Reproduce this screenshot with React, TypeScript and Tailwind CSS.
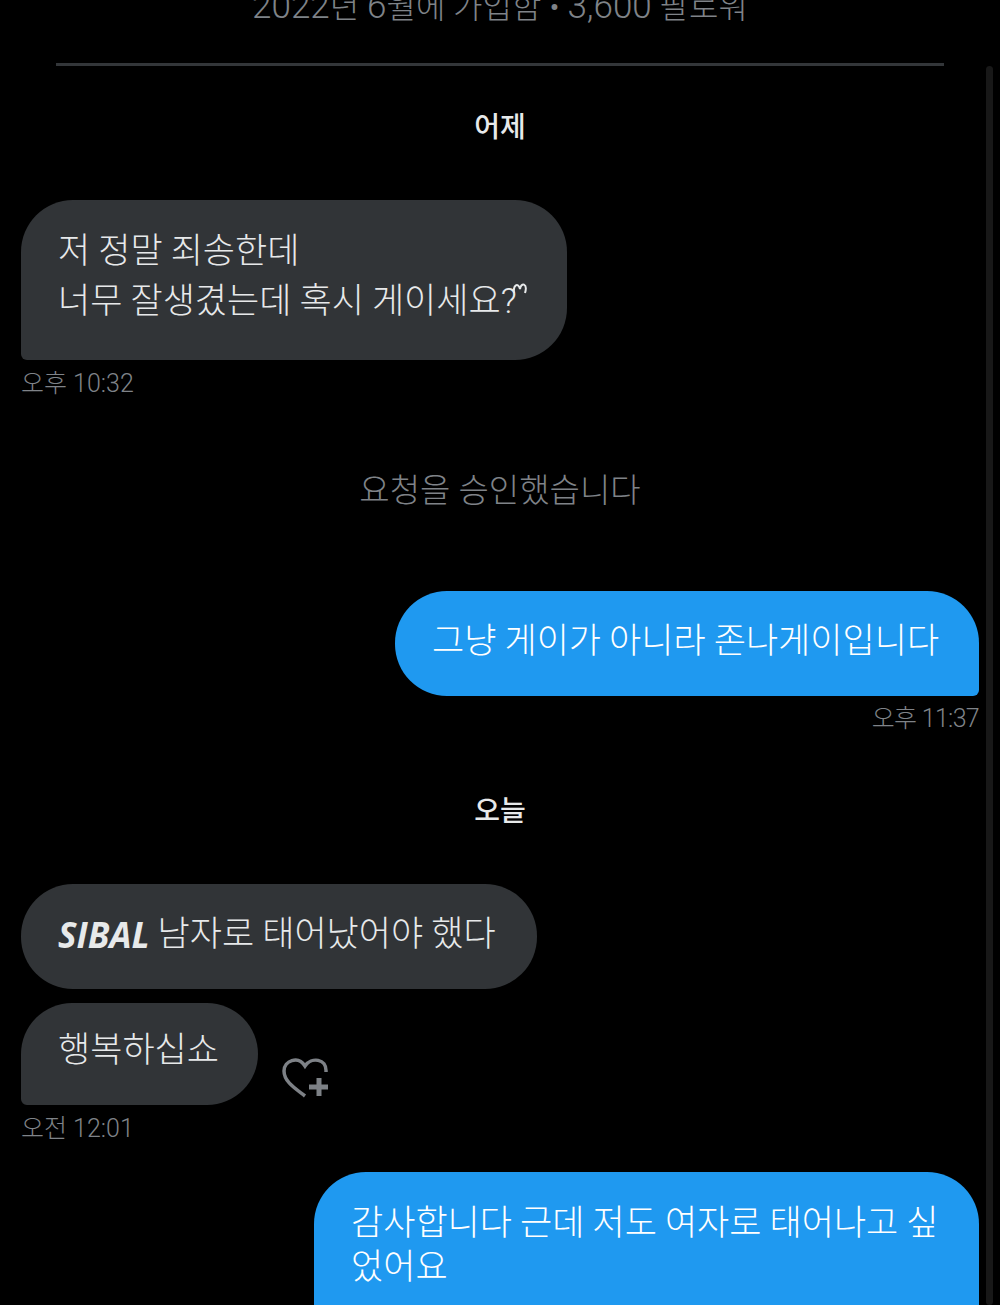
import React from 'react';

const font = "font-['Roboto','Noto_Sans_CJK_KR',sans-serif]";

const Bubble = ({ mine, className, children }: { mine?: boolean; className?: string; children: React.ReactNode }) => (
  <div
    className={`rounded-[52px] text-[35px] font-light [word-spacing:-0.5px] ${
      mine ? 'bg-[#1f99f0] text-white' : 'bg-[#313437] text-[#e7e9ea]'
    } ${className ?? ''}`}
  >
    {children}
  </div>
);

const Stamp = ({ className, children }: { className?: string; children: React.ReactNode }) => (
  <div className={`text-[25px] leading-[34px] font-light text-[#7f8388] ${className ?? ''}`}>{children}</div>
);

const HeartPlus = () => (
  <svg width="46" height="40" viewBox="0 0 46 40" fill="none" stroke="#7d8186" strokeWidth="3.5">
    <path d="M23 38 C14 31 2 24 2 13 C2 3 16 -3 23 8 C29 -1 45 0 44 14" />
    <path d="M37 20 V38 M27 29 H46" strokeWidth="5" />
  </svg>
);

export default function App() {
  return (
    <div className={`relative h-[1305px] w-[1000px] overflow-hidden bg-black ${font}`}>
      <div className="absolute right-[7px] top-[66px] h-[1239px] w-[7px] rounded-full bg-[#181818]" />

      <div className="-mt-[18px] h-[50px] text-center text-[32px] leading-[50px] font-light text-[#7f8388]">
        <span className="text-[35px]">2022</span>년 <span className="text-[35px]">6</span>월에 가입함 •{' '}
        <span className="text-[35px]">3,600</span> 팔로워
      </div>
      <div className="mx-[56px] mt-[31px] h-[3px] bg-[#333639]" />

      <div className="mt-[44px] text-center text-[28px] leading-[36px] font-medium text-[#e7e9ea]">어제</div>

      <div className="mt-[54px] flex flex-col items-start px-[21px]">
        <Bubble className="h-[160px] w-[546px] rounded-bl-[6px] px-[37px] pt-[27px] leading-[50px]">
          <div>저 정말 죄송한데</div>
          <div className="flex items-start">
            너무 잘생겼는데 혹시 게이세요?
            <svg className="mt-[5px] -ml-[4px]" width="15" height="13" viewBox="0 0 15 13" fill="none" stroke="#e7e9ea" strokeWidth="2">
              <path d="M1 11 C0 3 5 0 7 7 C8 0 15 1 12 11" />
            </svg>
          </div>
        </Bubble>
        <Stamp className="mt-[7px]">오후 10:32</Stamp>
      </div>

      <div className="mt-[65px] text-center text-[33px] leading-[50px] font-light text-[#7f8388]">요청을 승인했습니다</div>

      <div className="mt-[75px] flex flex-col items-end px-[21px]">
        <Bubble mine className="flex h-[105px] w-[584px] items-center rounded-br-[6px] px-[37px] pb-[2px]">
          그냥 게이가 아니라 존나게이입니다
        </Bubble>
        <Stamp className="mt-[6px] tracking-[-0.7px]">오후 11:37</Stamp>
      </div>

      <div className="mt-[58px] text-center text-[28px] leading-[36px] font-medium text-[#e7e9ea]">오늘</div>

      <div className="mt-[54px] flex flex-col items-start px-[21px]">
        <Bubble className="flex h-[105px] w-[516px] items-center gap-[8px] px-[37px] pb-[2px]">
          <span className="font-['Open_Sans',sans-serif] font-bold italic">SIBAL</span>
          <span>남자로 태어났어야 했다</span>
        </Bubble>
        <div className="mt-[14px] flex items-end gap-[24px]">
          <Bubble className="h-[102px] w-[237px] rounded-bl-[6px] px-[37px] pt-[23px] leading-[50px]">행복하십쇼</Bubble>
          <div className="mb-[7px]">
            <HeartPlus />
          </div>
        </div>
        <Stamp className="mt-[7px]">오전 12:01</Stamp>
      </div>

      <div className="mt-[26px] flex justify-end px-[21px]">
        <Bubble mine className="h-[200px] w-[665px] px-[37px] pt-[30px] leading-[44px]">
          <div>감사합니다 근데 저도 여자로 태어나고 싶</div>
          <div>었어요</div>
        </Bubble>
      </div>
    </div>
  );
}
